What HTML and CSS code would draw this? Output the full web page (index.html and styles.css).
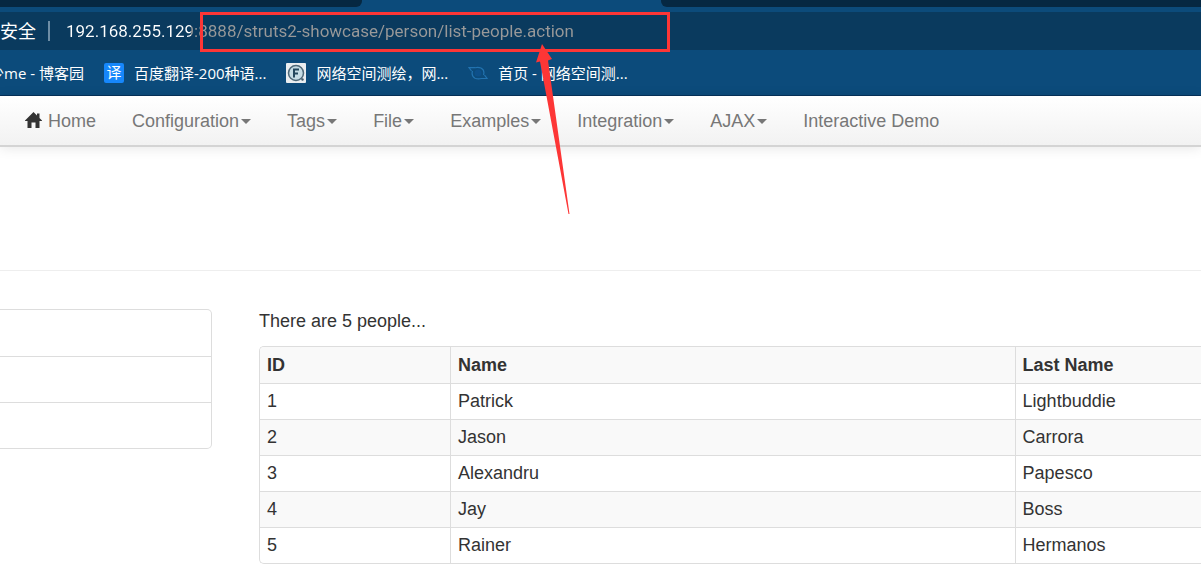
FILE: index.html
```html
<!DOCTYPE html>
<html lang="en">
<head>
<meta charset="UTF-8">
<title>Struts2 Showcase - List People</title>
<link rel="stylesheet" href="styles.css">
</head>
<body>
<header class="browser">
  <div class="tabs">
    <div class="tab tab-left"></div>
    <div class="tab-active"></div>
    <div class="tab tab-right"></div>
  </div>
  <div class="address">
    <label class="security" for="url"><span>不安全</span></label>
    <span class="divider"></span>
    <input class="url" id="url" type="text" value="192.168.255.129:8888/struts2-showcase/person/list-people.action">
  </div>
  <nav class="bookmarks">
    <a href="#" class="bookmark bookmark-cut"><span>少me - 博客园</span></a>
    <a href="#" class="bookmark"><span class="fanyi">译</span>百度翻译-200种语...</a>
    <a href="#" class="bookmark">
      <svg width="20" height="20" viewBox="0 0 20 20">
        <rect width="20" height="20" rx="1" fill="#e9edf0"/>
        <circle cx="10" cy="10" r="7.5" fill="#c5dce5" stroke="#4d6878" stroke-width="1.5"/>
        <path d="M8 14.500V6.500h5M8 10.500h4" fill="none" stroke="#23475d" stroke-width="2"/>
        <circle cx="16.500" cy="16.500" r="1.200" fill="#405968"/>
      </svg>网络空间测绘，网...</a>
    <a href="#" class="bookmark">
      <svg width="20" height="20" viewBox="0 0 20 20" fill="none" stroke="#2273b0" stroke-width="1.200">
        <circle cx="10" cy="10" r="3.500" fill="#0d508a" stroke="none"/>
        <path d="M4.500 8Q3 13 7 15.200Q10 16.500 13.500 15.500H19L16.500 12M15.500 12Q17 7 13 5Q10 3.800 7 4.700H1L3.500 8"/>
      </svg>首页 - 网络空间测...</a>
  </nav>
</header>

<nav class="navbar">
  <a href="#"><svg class="home" width="17" height="16" viewBox="0 0 17 16"><path d="M8.500 0L12 3.500V1.500h2.500V6L17 8.500V9H14.500V16H10.500V10.500H6.500V16H2.500V9H0V8.500Z" fill="#333"/></svg>Home</a>
  <a href="#">Configuration<b class="caret"></b></a>
  <a href="#">Tags<b class="caret"></b></a>
  <a href="#">File<b class="caret"></b></a>
  <a href="#">Examples<b class="caret"></b></a>
  <a href="#">Integration<b class="caret"></b></a>
  <a href="#">AJAX<b class="caret"></b></a>
  <a href="#">Interactive Demo</a>
</nav>

<div class="page-header"></div>

<div class="content">
  <ul class="side-menu">
    <li></li>
    <li></li>
    <li></li>
  </ul>
  <main>
    <p>There are 5 people...</p>
    <table class="people">
      <thead>
        <tr><th class="col-id">ID</th><th class="col-name">Name</th><th>Last Name</th></tr>
      </thead>
      <tbody>
        <tr><td>1</td><td>Patrick</td><td>Lightbuddie</td></tr>
        <tr><td>2</td><td>Jason</td><td>Carrora</td></tr>
        <tr><td>3</td><td>Alexandru</td><td>Papesco</td></tr>
        <tr><td>4</td><td>Jay</td><td>Boss</td></tr>
        <tr><td>5</td><td>Rainer</td><td>Hermanos</td></tr>
      </tbody>
    </table>
  </main>
</div>

<!-- red marks over the address -->
<div class="mark-box"></div>
<svg class="mark-arrow" width="36" height="172" viewBox="0 0 36 172">
  <path d="M7 1L17 16L13 17.500L34.500 171L33.500 171L5 18.500L1 19.500Z" fill="#fd3636"/>
</svg>
</body>
</html>
```

FILE: styles.css
```css
:root {
  --chrome: #0c4b7b;
  --chrome-field: #0a3a5e;
  --chrome-dark: #062842;
  --mark: #fd3636;
  --line: #ddd;
}
* {
  box-sizing: border-box;
}
body {
  margin: 0;
  background: #fff;
  color: #333;
  font: 18px/24px "Liberation Sans", Arial, sans-serif;
  overflow: hidden;
}
a {
  text-decoration: none;
}

/* browser chrome */
.browser {
  background: var(--chrome);
  border-bottom: 1px solid #06315a;
  font-family: "Open Sans", "Noto Sans CJK SC", sans-serif;
}
.tabs {
  display: grid;
  grid-template-columns: 362px 299px 1fr;
  height: 12px;
}
.tab {
  height: 7px;
  background: var(--chrome-dark);
}
.tab-left {
  border-bottom-right-radius: 6px;
}
.tab-right {
  border-bottom-left-radius: 6px;
}
.address {
  display: flex;
  align-items: center;
  height: 38px;
  background: var(--chrome-field);
}
.security {
  display: flex;
  justify-content: flex-end;
  width: 36px;
  color: #fff;
  white-space: nowrap;
}
.divider {
  width: 2px;
  height: 20px;
  margin: 0 16px 0 12px;
  background: #6e8da5;
}
.url {
  flex: 1;
  height: 30px;
  padding: 0;
  border: 0;
  outline: 0;
  font: 17px/30px Roboto, sans-serif;
  /* host is white, the rest of the url is grey */
  background: linear-gradient(to right, #fff 125px, #999 125px);
  -webkit-background-clip: text;
  background-clip: text;
  -webkit-text-fill-color: transparent;
}
.bookmarks {
  display: flex;
  gap: 20px;
  height: 45px;
  align-items: center;
}
.bookmark {
  display: flex;
  align-items: center;
  gap: 10px;
  color: #fff;
  font-size: 15px;
  line-height: 22px;
  white-space: nowrap;
}
.bookmark-cut {
  justify-content: flex-end;
  width: 84px;
}
.fanyi {
  width: 20px;
  height: 20px;
  border-radius: 2px;
  background: #1687fb;
  font-size: 15px;
  line-height: 19px;
  text-align: center;
}

/* site menu */
.navbar {
  display: flex;
  gap: 36px;
  align-items: center;
  height: 51px;
  padding-left: 25px;
  border-bottom: 2px solid #d4d4d4;
  background: linear-gradient(#fff, #f2f2f2);
  box-shadow: 0 1px 12px rgba(0, 0, 0, 0.1);
}
.navbar a {
  color: #777;
  white-space: nowrap;
}
.home {
  margin-right: 6px;
  vertical-align: -1px;
}
.caret {
  display: inline-block;
  margin-left: 2px;
  border-top: 5px solid #777;
  border-right: 5px solid transparent;
  border-left: 5px solid transparent;
  vertical-align: 3px;
}

.page-header {
  height: 124px;
  border-bottom: 1px solid #eee;
}
.content {
  display: grid;
  grid-template-columns: 212px 1fr;
  gap: 47px;
  align-items: start;
  padding-top: 38px;
}
.side-menu {
  margin: 0;
  padding: 0;
  list-style: none;
  border: 1px solid var(--line);
  border-left: 0;
  border-radius: 0 5px 5px 0;
}
.side-menu li {
  height: 46px;
}
.side-menu li + li {
  border-top: 1px solid var(--line);
}
p {
  margin: 0 0 13px;
}
.people {
  width: 100%;
  table-layout: fixed;
  border: 1px solid var(--line);
  border-right: 0;
  border-radius: 5px 0 0 5px;
  border-spacing: 0;
  overflow: hidden;
}
.people th, .people td {
  height: 36px;
  padding: 5px 7px 6px;
  text-align: left;
}
.people td {
  border-top: 1px solid var(--line);
}
.people th + th, .people td + td {
  border-left: 1px solid var(--line);
}
.people thead th, .people tbody tr:nth-child(even) td {
  background: #f9f9f9;
}
.col-id {
  width: 190px;
}
.col-name {
  width: 60%;
}

.mark-box {
  position: absolute;
  top: 12px;
  left: 200px;
  width: 470px;
  height: 40px;
  border: 3px solid var(--mark);
}
.mark-arrow {
  position: absolute;
  top: 43px;
  left: 535px;
}
```
